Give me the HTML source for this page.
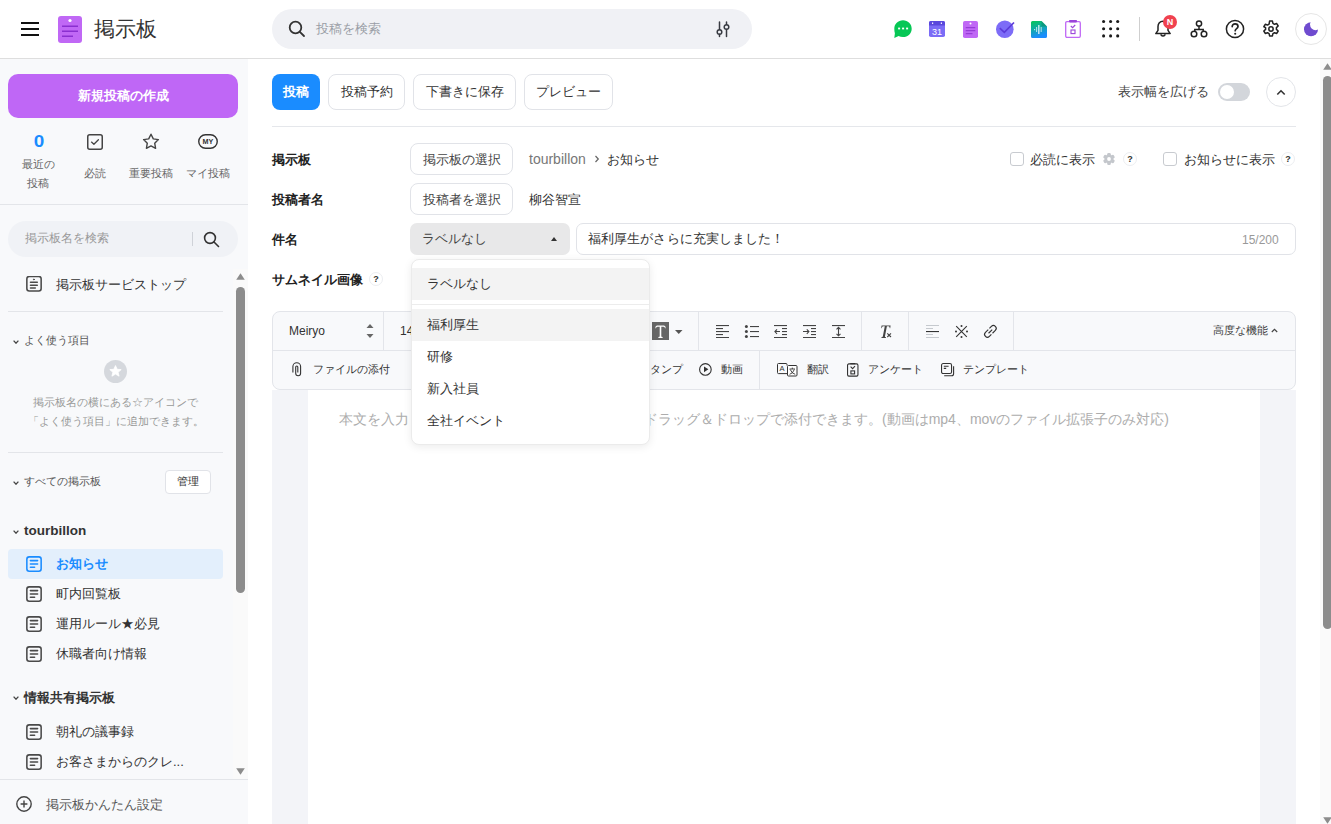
<!DOCTYPE html>
<html><head><meta charset="utf-8">
<style>
*{box-sizing:border-box;margin:0;padding:0}
html,body{width:1331px;height:824px;overflow:hidden;background:#fff;font-family:"Liberation Sans",sans-serif;color:#333}
.a{position:absolute}
svg{display:block}
#hdr{position:absolute;left:0;top:0;width:1331px;height:59px;border-bottom:1px solid #dedede;background:#fff}
#side{position:absolute;left:0;top:59px;width:248px;height:765px;background:#f8f9fb}
.t{position:absolute;white-space:nowrap;line-height:1}
.btn{position:absolute;border:1px solid #e1e3e8;border-radius:8px;background:#fff;height:36px;font-size:13px;color:#333;display:flex;align-items:center;justify-content:center}
.sbtn{position:absolute;border:1px solid #e1e3e8;border-radius:8px;background:#fff;height:32px;padding-top:2px;font-size:13px;color:#444;display:flex;align-items:center;justify-content:center}
.vd{position:absolute;width:1px;background:#e3e5ea}
</style></head><body>

<!-- HEADER -->
<div id="hdr">
  <!-- hamburger -->
  <div class="a" style="left:21px;top:22px;width:18px;height:2px;background:#111"></div>
  <div class="a" style="left:21px;top:28px;width:18px;height:2px;background:#111"></div>
  <div class="a" style="left:21px;top:34px;width:18px;height:2px;background:#111"></div>
  <!-- logo -->
  <svg class="a" style="left:58px;top:16px" width="24" height="27" viewBox="0 0 24 27">
    <rect x="0" y="0" width="24" height="27" rx="3" fill="#c068f5"/>
    <circle cx="12" cy="4.5" r="1.6" fill="#fff"/>
    <rect x="4" y="9.5" width="16" height="1.5" fill="#8a2fd0"/>
    <rect x="4" y="14.5" width="16" height="1.5" fill="#8a2fd0"/>
    <rect x="4" y="19.5" width="11" height="1.5" fill="#8a2fd0"/>
  </svg>
  <div class="t" style="left:94px;top:19px;font-size:20.5px;color:#333">掲示板</div>
  <!-- search -->
  <div class="a" style="left:272px;top:9px;width:480px;height:40px;border-radius:20px;background:#f0f1f5"></div>
  <svg class="a" style="left:288px;top:20px" width="18" height="18" viewBox="0 0 18 18" fill="none" stroke="#333" stroke-width="1.8">
    <circle cx="7.5" cy="7.5" r="5.8"/><path d="M11.8 11.8 L16 16" stroke-linecap="round"/>
  </svg>
  <div class="t" style="left:316px;top:22px;font-size:13px;color:#9a9ea6">投稿を検索</div>
  <svg class="a" style="left:715px;top:20px" width="16" height="18" viewBox="0 0 16 18" fill="none" stroke="#383b42" stroke-width="1.5" stroke-linecap="round"><path d="M4.5 2v7.6M4.5 14.3v2.2M11.5 2v2.6M11.5 9.4v7.1"/><circle cx="4.5" cy="12" r="2.3"/><circle cx="11.5" cy="7" r="2.3"/></svg>

  <!-- app icons -->
  <svg class="a" style="left:894px;top:20px" width="18" height="18" viewBox="0 0 18 18">
    <path d="M9 0.3C13.9 0.3 17.7 4 17.7 8.7C17.7 13.4 13.9 17 9 17C7.3 17 5.9 16.6 4.6 15.9L0.3 18L0.9 13.2C0.5 12 0.3 10.4 0.3 8.7C0.3 4 4.1 0.3 9 0.3Z" fill="#06c755"/>
    <rect x="4.1" y="7.6" width="2" height="1.8" fill="#fff"/><rect x="8.1" y="7.6" width="2" height="1.8" fill="#fff"/><rect x="12.1" y="7.6" width="2" height="1.8" fill="#fff"/>
  </svg>
  <svg class="a" style="left:929px;top:21px" width="16" height="16" viewBox="0 0 16 16">
    <rect x="0" y="0" width="16" height="16" rx="1.8" fill="#7b6cf6"/>
    <path d="M1.8 0H14.2A1.8 1.8 0 0 1 16 1.8V4.5H0V1.8A1.8 1.8 0 0 1 1.8 0Z" fill="#5a47dc"/>
    <rect x="3" y="1.5" width="1.2" height="1.4" fill="#fff"/><rect x="11.8" y="1.5" width="1.2" height="1.4" fill="#fff"/>
    <text x="8" y="14" font-family="Liberation Sans" font-size="9" fill="#fff" text-anchor="middle">31</text>
  </svg>
  <svg class="a" style="left:963px;top:21px" width="15" height="17" viewBox="0 0 15 17">
    <rect x="0" y="0" width="15" height="17" rx="1.8" fill="#c068f5"/>
    <circle cx="7.5" cy="2.6" r="1" fill="#fff"/>
    <rect x="2.7" y="6.2" width="9.6" height="1" fill="#8d33cf"/><rect x="2.7" y="9.2" width="9.6" height="1" fill="#8d33cf"/><rect x="2.7" y="12.2" width="6.8" height="1" fill="#8d33cf"/>
  </svg>
  <svg class="a" style="left:996px;top:20px" width="19" height="18" viewBox="0 0 19 18">
    <circle cx="8.8" cy="9.2" r="8.8" fill="#7d6cf7"/>
    <path d="M3.8 8.2L8.3 12.3L18 2.5" fill="none" stroke="#5b3bd8" stroke-width="1.7"/>
  </svg>
  <svg class="a" style="left:1031px;top:21px" width="16" height="17" viewBox="0 0 16 17">
    <defs><linearGradient id="gd" x1="0" y1="0" x2="0.3" y2="1"><stop offset="0" stop-color="#06c755"/><stop offset="1" stop-color="#1a8cff"/></linearGradient></defs>
    <path d="M1.5 0H10.5L16 5.5V15.5A1.5 1.5 0 0 1 14.5 17H1.5A1.5 1.5 0 0 1 0 15.5V1.5A1.5 1.5 0 0 1 1.5 0Z" fill="url(#gd)"/>
    <path d="M10.5 0L16 5.5H10.5Z" fill="#0a8a6a" opacity="0.6"/>
    <rect x="7.3" y="4" width="1.1" height="9" fill="#fff"/><rect x="5.2" y="6" width="0.9" height="5" fill="#fff" opacity="0.8"/><rect x="9.7" y="6" width="0.9" height="5" fill="#fff" opacity="0.8"/><rect x="3.3" y="8" width="0.8" height="1.2" fill="#fff"/>
  </svg>
  <svg class="a" style="left:1065px;top:20px" width="16" height="18" viewBox="0 0 16 18" fill="none">
    <rect x="0.7" y="1.7" width="14.6" height="15.6" rx="1.2" stroke="#c068f5" stroke-width="1.3"/>
    <rect x="4" y="0" width="8" height="2.4" rx="0.8" fill="#9c45da"/>
    <path d="M5.8 6L7.6 7.7L10.2 5" stroke="#9c45da" stroke-width="1.1"/>
    <rect x="6" y="10" width="4" height="3.6" stroke="#9c45da" stroke-width="1.1"/>
  </svg>
  <!-- grid -->
  <svg class="a" style="left:1100px;top:18px" width="21" height="21" viewBox="0 0 21 21" fill="#1b1b1b">
    <circle cx="3.6" cy="3.5" r="1.55"/><circle cx="10.6" cy="3.5" r="1.55"/><circle cx="17.7" cy="3.5" r="1.55"/>
    <circle cx="3.6" cy="10.7" r="1.55"/><circle cx="10.6" cy="10.7" r="1.55"/><circle cx="17.7" cy="10.7" r="1.55"/>
    <circle cx="3.6" cy="17.9" r="1.55"/><circle cx="10.6" cy="17.9" r="1.55"/><circle cx="17.7" cy="17.9" r="1.55"/>
  </svg>
  <div class="a" style="left:1139px;top:17px;width:1px;height:24px;background:#cfcfcf"></div>
  <!-- bell -->
  <svg class="a" style="left:1154px;top:19px" width="18" height="19" viewBox="0 0 18 19" fill="none" stroke="#222" stroke-width="1.5" stroke-linejoin="round">
    <path d="M9 2.2C5.9 2.2 4 4.6 4 7.6V11.3L1.8 14.6H16.2L14 11.3V7.6C14 4.6 12.1 2.2 9 2.2Z"/>
    <path d="M7 15.2A2 1.7 0 0 0 11 15.2"/>
  </svg>
  <div class="a" style="left:1163px;top:15px;width:14px;height:14px;border-radius:7px;background:#f0414f;color:#fff;font-size:9px;font-weight:bold;text-align:center;line-height:14px">N</div>
  <!-- org -->
  <svg class="a" style="left:1190px;top:20px" width="18" height="18" viewBox="0 0 18 18" fill="none" stroke="#222" stroke-width="1.5">
    <circle cx="9" cy="3.5" r="2.6"/><circle cx="4" cy="14" r="2.8"/><circle cx="14" cy="14" r="2.8"/>
    <path d="M9 6.1V8.8M4.8 11.2V9.4H13.2V11.2"/>
  </svg>
  <!-- help -->
  <svg class="a" style="left:1225px;top:19px" width="20" height="20" viewBox="0 0 20 20" fill="none" stroke="#222" stroke-width="1.5">
    <circle cx="10" cy="10" r="8.6"/>
    <path d="M7.2 7.6C7.2 5.9 8.4 4.8 10.1 4.8C11.8 4.8 13 5.9 13 7.4C13 9.5 10.2 9.6 10.2 11.7" stroke-linecap="round" stroke-width="1.7"/>
    <circle cx="10.2" cy="14.8" r="1.05" fill="#222" stroke="none"/>
  </svg>
  <!-- gear -->
  <svg class="a" style="left:1261px;top:19px" width="20" height="20" viewBox="0 0 24 24" fill="none" stroke="#222" stroke-width="1.8" stroke-linejoin="round">
    <path d="M10.3 2.5h3.4l.6 2.8 1.9 1.1 2.7-.9 1.7 2.9-2.1 1.9v2.2l2.1 1.9-1.7 2.9-2.7-.9-1.9 1.1-.6 2.8h-3.4l-.6-2.8-1.9-1.1-2.7.9-1.7-2.9 2.1-1.9v-2.2L3.4 9.3l1.7-2.9 2.7.9 1.9-1.1z"/>
    <circle cx="12" cy="12" r="2.6"/>
  </svg>
  <!-- moon -->
  <div class="a" style="left:1295px;top:13px;width:32px;height:32px;border-radius:16px;border:1px solid #e6e6e6;background:#fff"></div>
  <svg class="a" style="left:1303px;top:21px" width="16" height="16" viewBox="0 0 16 16"><circle cx="8" cy="8.2" r="7" fill="#6f4bcf"/><circle cx="12.6" cy="3.6" r="5.6" fill="#fff"/></svg>
</div>

<!-- SIDEBAR -->
<div id="side">
  <div class="a" style="left:8px;top:15px;width:230px;height:44px;border-radius:10px;background:#bf67f6"></div>
  <div class="t" style="left:8px;top:30px;width:230px;text-align:center;font-size:13px;font-weight:bold;color:#fff">新規投稿の作成</div>
  <!-- quick links -->
  <div class="t" style="left:28.5px;top:75px;width:20px;text-align:center;font-size:16px;font-weight:bold;color:#1a8cff;transform:scaleX(1.18)">0</div>
  <div class="t" style="left:13px;top:96px;width:50px;text-align:center;font-size:11px;color:#666;line-height:19px;white-space:normal">最近の<br>投稿</div>
  <svg class="a" style="left:87px;top:75px" width="16" height="16" viewBox="0 0 16 16" fill="none" stroke="#444" stroke-width="1.5" stroke-linecap="round" stroke-linejoin="round"><rect x="0.75" y="0.75" width="14.5" height="14.5" rx="2"/><path d="M4.5 8.1L6.9 10.3L11.4 5.8" stroke-width="1.3"/></svg>
  <div class="t" style="left:70px;top:109px;width:50px;text-align:center;font-size:11px;color:#666">必読</div>
  <svg class="a" style="left:142px;top:74px" width="18" height="17" viewBox="0 0 18 17" fill="none" stroke="#444" stroke-width="1.4" stroke-linejoin="round"><path d="M9 1.2L11.3 5.9L16.4 6.6L12.7 10.2L13.6 15.3L9 12.9L4.4 15.3L5.3 10.2L1.6 6.6L6.7 5.9Z"/></svg>
  <div class="t" style="left:126px;top:109px;width:50px;text-align:center;font-size:11px;color:#666">重要投稿</div>
  <svg class="a" style="left:198px;top:75px" width="20" height="15" viewBox="0 0 20 15"><rect x="0.75" y="0.75" width="18.5" height="13.5" rx="6.75" fill="none" stroke="#333" stroke-width="1.4"/><text x="10" y="10.4" font-family="Liberation Sans" font-weight="bold" font-size="7.2" fill="#333" text-anchor="middle">MY</text></svg>
  <div class="t" style="left:183px;top:109px;width:50px;text-align:center;font-size:11px;color:#666">マイ投稿</div>
  <div class="a" style="left:0;top:145px;width:248px;height:1px;background:#e3e5e9"></div>
  <!-- search -->
  <div class="a" style="left:8px;top:162px;width:230px;height:36px;border-radius:18px;background:#f0f2f6"></div>
  <div class="t" style="left:25px;top:173px;font-size:12px;color:#999">掲示板名を検索</div>
  <div class="a" style="left:192px;top:173px;width:1px;height:14px;background:#cfd2d8"></div>
  <svg class="a" style="left:203px;top:172px" width="17" height="17" viewBox="0 0 17 17" fill="none" stroke="#333" stroke-width="1.6"><circle cx="7" cy="7" r="5.4"/><path d="M11 11L15.5 15.5" stroke-linecap="round"/></svg>
  <!-- scroll area -->
  <div class="a" style="left:233px;top:210px;width:15px;height:510px;background:#fafafa"></div>
  <svg class="a" style="left:236px;top:214px" width="9" height="7" viewBox="0 0 9 7"><path d="M4.5 0.3L8.8 6.7H0.2Z" fill="#8c8c8c"/></svg>
  <div class="a" style="left:236px;top:228px;width:9px;height:306px;border-radius:4.5px;background:#8c8c8c"></div>
  <svg class="a" style="left:236px;top:709px" width="9" height="7" viewBox="0 0 9 7"><path d="M0.2 0.3H8.8L4.5 6.7Z" fill="#8c8c8c"/></svg>

  <svg class="a" style="left:26px;top:217px" width="16" height="16" viewBox="0 0 16 16" fill="none" stroke="#4a4a4a" stroke-width="1.55" stroke-linecap="round"><rect x="0.85" y="0.45" width="14.3" height="14.5" rx="2.4"/><circle cx="7.9" cy="3.4" r="0.5" fill="#4a4a4a" stroke-width="0.8"/><path d="M4.5 6.2H11.3M4.5 9.2H11.3M4.5 12H9.3"/></svg>
  <div class="t" style="left:56px;top:219px;font-size:13px;color:#333">掲示板サービストップ</div>
  <div class="a" style="left:8px;top:252px;width:215px;height:1px;background:#e3e5e9"></div>
  <svg class="a" style="left:13px;top:281px" width="6" height="4" viewBox="0 0 6 4"><path d="M0.6 0.6L3 3.2L5.4 0.6" fill="none" stroke="#444" stroke-width="1.3"/></svg>
  <div class="t" style="left:24px;top:276px;font-size:11px;color:#555">よく使う項目</div>
  <svg class="a" style="left:104px;top:301px" width="23" height="23" viewBox="0 0 23 23"><circle cx="11.5" cy="11.5" r="11.5" fill="#d5d8dd"/><path d="M11.5 5.6L13.2 9.3L17.2 9.6L14.1 12.3L15.1 16.2L11.5 14.1L7.9 16.2L8.9 12.3L5.8 9.6L9.8 9.3Z" fill="#fff" stroke="#fff" stroke-width="0.8" stroke-linejoin="round"/></svg>
  <div class="t" style="left:8px;top:334px;width:215px;text-align:center;font-size:11px;line-height:19px;color:#999;white-space:normal">掲示板名の横にある☆アイコンで<br>「よく使う項目」に追加できます。</div>
  <div class="a" style="left:8px;top:393px;width:215px;height:1px;background:#e3e5e9"></div>
  <svg class="a" style="left:13px;top:422px" width="6" height="4" viewBox="0 0 6 4"><path d="M0.6 0.6L3 3.2L5.4 0.6" fill="none" stroke="#444" stroke-width="1.3"/></svg>
  <div class="t" style="left:24px;top:417px;font-size:11px;color:#555">すべての掲示板</div>
  <div class="a" style="left:165px;top:411px;width:46px;height:24px;border-radius:4px;border:1px solid #e1e3e8;background:#fff"></div>
  <div class="t" style="left:165px;top:417px;width:46px;text-align:center;font-size:11px;color:#333">管理</div>
  <svg class="a" style="left:13px;top:471px" width="6" height="4" viewBox="0 0 6 4"><path d="M0.6 0.6L3 3.2L5.4 0.6" fill="none" stroke="#444" stroke-width="1.3"/></svg>
  <div class="t" style="left:24px;top:465px;font-size:13.5px;font-weight:bold;color:#333">tourbillon</div>
  <div class="a" style="left:8px;top:490px;width:215px;height:30px;border-radius:4px;background:#e3effc"></div>
  <svg class="a" style="left:26px;top:497px" width="16" height="16" viewBox="0 0 16 16" fill="none" stroke="#1a8cff" stroke-width="1.55" stroke-linecap="round"><rect x="0.85" y="0.85" width="14.3" height="14.3" rx="2.4"/><path d="M4.4 4.6H11.6M4.4 7.9H11.6M4.4 11.3H8.6"/></svg>
  <div class="t" style="left:56px;top:498px;font-size:13px;font-weight:bold;color:#1a8cff">お知らせ</div>
  <svg class="a" style="left:26px;top:527px" width="16" height="16" viewBox="0 0 16 16" fill="none" stroke="#4a4a4a" stroke-width="1.55" stroke-linecap="round"><rect x="0.85" y="0.85" width="14.3" height="14.3" rx="2.4"/><path d="M4.4 4.6H11.6M4.4 7.9H11.6M4.4 11.3H8.6"/></svg>
  <div class="t" style="left:56px;top:528px;font-size:13px;color:#333">町内回覧板</div>
  <svg class="a" style="left:26px;top:557px" width="16" height="16" viewBox="0 0 16 16" fill="none" stroke="#4a4a4a" stroke-width="1.55" stroke-linecap="round"><rect x="0.85" y="0.85" width="14.3" height="14.3" rx="2.4"/><path d="M4.4 4.6H11.6M4.4 7.9H11.6M4.4 11.3H8.6"/></svg>
  <div class="t" style="left:56px;top:558px;font-size:13px;color:#333">運用ルール★必見</div>
  <svg class="a" style="left:26px;top:587px" width="16" height="16" viewBox="0 0 16 16" fill="none" stroke="#4a4a4a" stroke-width="1.55" stroke-linecap="round"><rect x="0.85" y="0.85" width="14.3" height="14.3" rx="2.4"/><path d="M4.4 4.6H11.6M4.4 7.9H11.6M4.4 11.3H8.6"/></svg>
  <div class="t" style="left:56px;top:588px;font-size:13px;color:#333">休職者向け情報</div>
  <svg class="a" style="left:13px;top:637px" width="6" height="4" viewBox="0 0 6 4"><path d="M0.6 0.6L3 3.2L5.4 0.6" fill="none" stroke="#444" stroke-width="1.3"/></svg>
  <div class="t" style="left:24px;top:632px;font-size:13px;font-weight:bold;color:#333">情報共有掲示板</div>
  <svg class="a" style="left:26px;top:665px" width="16" height="16" viewBox="0 0 16 16" fill="none" stroke="#4a4a4a" stroke-width="1.55" stroke-linecap="round"><rect x="0.85" y="0.85" width="14.3" height="14.3" rx="2.4"/><path d="M4.4 4.6H11.6M4.4 7.9H11.6M4.4 11.3H8.6"/></svg>
  <div class="t" style="left:56px;top:666px;font-size:13px;color:#333">朝礼の議事録</div>
  <svg class="a" style="left:26px;top:695px" width="16" height="16" viewBox="0 0 16 16" fill="none" stroke="#4a4a4a" stroke-width="1.55" stroke-linecap="round"><rect x="0.85" y="0.85" width="14.3" height="14.3" rx="2.4"/><path d="M4.4 4.6H11.6M4.4 7.9H11.6M4.4 11.3H8.6"/></svg>
  <div class="t" style="left:56px;top:696px;font-size:13px;color:#333">お客さまからのクレ...</div>
  <div class="a" style="left:0;top:720px;width:248px;height:1px;background:#e3e5e9"></div>
  <svg class="a" style="left:16px;top:737px" width="16" height="16" viewBox="0 0 16 16" fill="none" stroke="#444" stroke-width="1.4"><circle cx="8" cy="8" r="7.2"/><path d="M8 4.6V11.4M4.6 8H11.4"/></svg>
  <div class="t" style="left:46px;top:739px;font-size:13px;color:#555">掲示板かんたん設定</div>
</div>


<!-- MAIN -->
<div class="a" style="left:272px;top:74px;width:48px;height:36px;border-radius:8px;background:#1a8cff;color:#fff;font-size:13px;font-weight:bold;display:flex;align-items:center;justify-content:center">投稿</div>
<div class="btn" style="left:328px;top:74px;width:77px">投稿予約</div>
<div class="btn" style="left:413px;top:74px;width:103px">下書きに保存</div>
<div class="btn" style="left:524px;top:74px;width:89px">プレビュー</div>
<div class="t" style="left:1118px;top:85px;font-size:13px;color:#444">表示幅を広げる</div>
<div class="a" style="left:1218px;top:83px;width:32px;height:18px;border-radius:9px;background:#d3d6db"></div>
<div class="a" style="left:1220px;top:85px;width:14px;height:14px;border-radius:7px;background:#fff"></div>
<div class="a" style="left:1266px;top:77px;width:30px;height:30px;border-radius:15px;border:1px solid #e3e5e9;background:#fff"></div>
<svg class="a" style="left:1276px;top:89px" width="10" height="7" viewBox="0 0 10 7"><path d="M1.3 5.5L5 1.8L8.7 5.5" fill="none" stroke="#333" stroke-width="1.6"/></svg>
<div class="a" style="left:272px;top:126px;width:1024px;height:1px;background:#e5e7eb"></div>

<div class="t" style="left:272px;top:153px;font-size:13px;font-weight:bold;color:#222">掲示板</div>
<div class="sbtn" style="left:410px;top:143px;width:103px">掲示板の選択</div>
<div class="t" style="left:529px;top:152px;font-size:14px;color:#777">tourbillon</div>
<svg class="a" style="left:594px;top:155px" width="6" height="8" viewBox="0 0 6 8"><path d="M1.5 1L4.3 4L1.5 7" fill="none" stroke="#666" stroke-width="1.2"/></svg>
<div class="t" style="left:607px;top:153px;font-size:13px;color:#333">お知らせ</div>
<div class="a" style="left:1010px;top:152px;width:14px;height:14px;border-radius:3px;border:1px solid #c8cbd0;background:#fff"></div>
<div class="t" style="left:1030px;top:153px;font-size:13px;color:#333">必読に表示</div>
<svg class="a" style="left:1103px;top:153px" width="12" height="12" viewBox="0 0 12 12"><g fill="#c4c7cc"><circle cx="6" cy="6" r="4.4"/><rect x="4.2" y="0" width="3.6" height="12" rx="1.3"/><rect x="4.2" y="0" width="3.6" height="12" rx="1.3" transform="rotate(60 6 6)"/><rect x="4.2" y="0" width="3.6" height="12" rx="1.3" transform="rotate(120 6 6)"/></g><circle cx="6" cy="6" r="1.9" fill="#fff"/></svg>
<div class="a" style="left:1123px;top:152px;width:14px;height:14px;border-radius:7px;border:1px solid #eceef1;background:#fff;font-size:9px;font-weight:bold;color:#333;text-align:center;line-height:12px">?</div>
<div class="a" style="left:1163px;top:152px;width:14px;height:14px;border-radius:3px;border:1px solid #c8cbd0;background:#fff"></div>
<div class="t" style="left:1184px;top:153px;font-size:13px;color:#333">お知らせに表示</div>
<div class="a" style="left:1281px;top:152px;width:14px;height:14px;border-radius:7px;border:1px solid #eceef1;background:#fff;font-size:9px;font-weight:bold;color:#333;text-align:center;line-height:12px">?</div>

<div class="t" style="left:272px;top:193px;font-size:13px;font-weight:bold;color:#222">投稿者名</div>
<div class="sbtn" style="left:410px;top:183px;width:103px">投稿者を選択</div>
<div class="t" style="left:529px;top:193px;font-size:13px;color:#333">柳谷智宣</div>

<div class="t" style="left:272px;top:233px;font-size:13px;font-weight:bold;color:#222">件名</div>
<div class="a" style="left:410px;top:223px;width:160px;height:32px;border-radius:7px;background:#e8e8e9"></div>
<div class="t" style="left:422px;top:232px;font-size:13px;color:#444">ラベルなし</div>
<svg class="a" style="left:551px;top:237px" width="6" height="4" viewBox="0 0 6 4"><path d="M3 0L6 4H0Z" fill="#333"/></svg>
<div class="a" style="left:576px;top:223px;width:720px;height:32px;border-radius:7px;border:1px solid #e1e3e8;background:#fff"></div>
<div class="t" style="left:588px;top:232px;font-size:13px;color:#333;letter-spacing:0.1px">福利厚生がさらに充実しました！</div>
<div class="t" style="left:1242px;top:234px;font-size:12px;color:#999">15/200</div>

<div class="t" style="left:272px;top:273px;font-size:13px;font-weight:bold;color:#222">サムネイル画像</div>
<div class="a" style="left:369px;top:272px;width:14px;height:14px;border-radius:7px;border:1px solid #eceef1;background:#fff;font-size:9px;font-weight:bold;color:#333;text-align:center;line-height:12px">?</div>

<!-- editor -->
<div class="a" style="left:272px;top:311px;width:1024px;height:79px;border:1px solid #e3e5ea;border-radius:8px;background:#f8f9fb"></div>
<div class="a" style="left:272px;top:350px;width:1024px;height:1px;background:#e3e5ea"></div>
<div class="a" style="left:272px;top:390px;width:36px;height:434px;background:#f3f4f8"></div>
<div class="a" style="left:1260px;top:390px;width:36px;height:434px;background:#f3f4f8"></div>


<!-- toolbar row1 -->
<div class="t" style="left:289px;top:325px;font-size:12px;color:#333">Meiryo</div>
<svg class="a" style="left:366px;top:324px" width="8" height="14" viewBox="0 0 8 14"><path d="M4 0L7.5 4H0.5Z M0.5 10H7.5L4 14Z" fill="#666"/></svg>
<div class="vd" style="left:383px;top:312px;height:38px"></div>
<div class="t" style="left:400px;top:325px;font-size:12px;color:#333">14</div>
<svg class="a" style="left:652px;top:322px" width="17" height="18" viewBox="0 0 17 18"><rect width="17" height="18" fill="#666"/>
  <path d="M3.3 6.2Q3.3 3.6 5 3.6H12Q13.7 3.6 13.7 6.2L13 6.2Q12.6 4.8 11.4 4.8H9.3V14.6Q9.3 15 10.6 15V16H6.4V15Q7.7 15 7.7 14.6V4.8H5.6Q4.4 4.8 4 6.2Z" fill="#fff"/></svg>
<svg class="a" style="left:675px;top:330px" width="8" height="4" viewBox="0 0 8 4"><path d="M0 0H7.5L3.75 4Z" fill="#555"/></svg>
<div class="vd" style="left:698px;top:312px;height:38px"></div>
<svg class="a" style="left:716px;top:325px" width="13" height="13" viewBox="0 0 13 13" fill="#444"><rect x="0" y="0" width="13" height="1.1"/><rect x="0" y="3" width="7" height="1.1"/><rect x="0" y="6" width="13" height="1.1"/><rect x="0" y="9" width="7" height="1.1"/><rect x="0" y="12" width="13" height="1.1"/></svg>
<svg class="a" style="left:744px;top:325px" width="16" height="13" viewBox="0 0 16 13" fill="#444"><circle cx="2.4" cy="1.5" r="1.5"/><circle cx="2.4" cy="6.5" r="1.5"/><circle cx="2.4" cy="11.5" r="1.5"/><rect x="6" y="1" width="9" height="1.1"/><rect x="6" y="6" width="9" height="1.1"/><rect x="6" y="11" width="9" height="1.1"/></svg>
<svg class="a" style="left:774px;top:325px" width="13" height="13" viewBox="0 0 13 13"><g fill="#444"><rect x="0" y="0" width="13" height="1.1"/><rect x="8" y="3" width="5" height="1.1"/><rect x="8" y="6" width="5" height="1.1"/><rect x="8" y="9" width="5" height="1.1"/><rect x="0" y="12" width="13" height="1.1"/></g><path d="M6 6.55H1M3 4.3L0.9 6.55L3 8.8" fill="none" stroke="#444" stroke-width="1.1"/></svg>
<svg class="a" style="left:803px;top:325px" width="13" height="13" viewBox="0 0 13 13"><g fill="#444"><rect x="0" y="0" width="13" height="1.1"/><rect x="8" y="3" width="5" height="1.1"/><rect x="8" y="6" width="5" height="1.1"/><rect x="8" y="9" width="5" height="1.1"/><rect x="0" y="12" width="13" height="1.1"/></g><path d="M0 6.55H5.5M3.8 4.3L5.9 6.55L3.8 8.8" fill="none" stroke="#444" stroke-width="1.1"/></svg>
<svg class="a" style="left:832px;top:325px" width="13" height="13" viewBox="0 0 13 13"><g fill="#444"><rect x="0" y="0" width="13" height="1.1"/><rect x="0" y="12" width="13" height="1.1"/></g><path d="M6.5 2.2V10.9M4.5 4.3L6.5 2.3L8.5 4.3M4.5 8.8L6.5 10.8L8.5 8.8" fill="none" stroke="#444" stroke-width="1.1"/></svg>
<div class="vd" style="left:861px;top:312px;height:38px"></div>
<svg class="a" style="left:879px;top:324px" width="14" height="15" viewBox="0 0 14 15"><path d="M2.6 1.6H11.6L11.2 4.2H10.8Q10.7 2.3 9.6 2.3H7.9L5.9 12.6Q5.8 13.2 7 13.3V13.9H2.4V13.3Q3.6 13.2 3.8 12.6L5.8 2.3H4.2Q3.1 2.3 2.5 4.2H2.1Z" fill="#444"/><path d="M8.3 9.3L12 13M12 9.3L8.3 13" stroke="#444" stroke-width="1.1"/></svg>
<div class="vd" style="left:908px;top:312px;height:38px"></div>
<svg class="a" style="left:926px;top:325px" width="13" height="13" viewBox="0 0 13 13"><g fill="#c5c9ce"><rect x="0" y="0" width="13" height="1"/><rect x="0" y="3" width="7" height="1"/><rect x="0" y="9" width="7" height="1"/><rect x="0" y="12" width="13" height="1"/></g><rect x="0" y="6" width="13" height="1.1" fill="#333"/></svg>
<svg class="a" style="left:955px;top:325px" width="13" height="13" viewBox="0 0 13 13"><path d="M1.2 1.2L11.8 11.8M11.8 1.2L1.2 11.8" stroke="#333" stroke-width="1.1"/><g fill="#333"><circle cx="6.5" cy="1" r="1"/><circle cx="6.5" cy="12" r="1"/><circle cx="1" cy="6.5" r="1"/><circle cx="12" cy="6.5" r="1"/></g></svg>
<svg class="a" style="left:980px;top:321px" width="22" height="21" viewBox="0 0 22 21"><g transform="translate(10.4,10.4) rotate(-45)" fill="none" stroke="#333" stroke-width="1.15"><path d="M1.4 -2.8 H4.2 A2.8 2.8 0 0 1 4.2 2.8 H0.2"/><path d="M-1.4 2.8 H-4.2 A2.8 2.8 0 0 1 -4.2 -2.8 H-0.2"/><path d="M-2.6 0 H2.6"/></g></svg>
<div class="vd" style="left:1013px;top:312px;height:38px"></div>
<div class="t" style="left:1213px;top:325px;font-size:11px;color:#444">高度な機能</div>
<svg class="a" style="left:1271px;top:328px" width="7" height="5" viewBox="0 0 7 5"><path d="M0.8 4L3.5 1.3L6.2 4" fill="none" stroke="#444" stroke-width="1.2"/></svg>
<!-- toolbar row2 -->
<svg class="a" style="left:292px;top:362px" width="10" height="15" viewBox="0 0 10 15" fill="none" stroke="#333" stroke-width="1.1"><path d="M0.9 10.6V4.6A3.6 3.6 0 0 1 8.6 4.6V11.3A2.4 2.4 0 0 1 3.7 11.3V5A1.05 1.05 0 0 1 5.8 5V10.4"/></svg>
<div class="t" style="left:313px;top:364px;font-size:11px;color:#333">ファイルの添付</div>
<div class="t" style="left:639px;top:364px;font-size:11px;color:#333">スタンプ</div>
<svg class="a" style="left:699px;top:363px" width="13" height="13" viewBox="0 0 13 13"><circle cx="6.4" cy="6.4" r="5.8" fill="none" stroke="#333" stroke-width="1.1"/><path d="M5 3.4V9.2L9.4 6.3Z" fill="#333"/></svg>
<div class="t" style="left:721px;top:364px;font-size:11px;color:#333">動画</div>
<div class="vd" style="left:759px;top:351px;height:39px"></div>
<svg class="a" style="left:777px;top:363px" width="21" height="14" viewBox="0 0 21 14"><path d="M10 10.6H1.5A1 1 0 0 1 0.5 9.6V1.5A1 1 0 0 1 1.5 0.5H9A1 1 0 0 1 10 1.5V2.5" fill="none" stroke="#333" stroke-width="1"/><rect x="10.5" y="2.5" width="9.5" height="10.5" rx="1" fill="#fff" stroke="#333" stroke-width="1"/><text x="2.6" y="8.2" font-family="Liberation Sans" font-size="7.5" fill="#333">A</text><path d="M12.6 6H18M15.3 4.6V6M13.2 6.5Q15 10.8 18.2 11.3M17.4 6.5Q15.6 10.8 12.6 11.3" fill="none" stroke="#333" stroke-width="0.9"/></svg>
<div class="t" style="left:807px;top:364px;font-size:11px;color:#333">翻訳</div>
<svg class="a" style="left:847px;top:363px" width="12" height="14" viewBox="0 0 12 14" fill="none" stroke="#333" stroke-width="1.1"><rect x="0.55" y="0.9" width="10.4" height="12.2" rx="1.3"/><path d="M3.3 0.6H8.2" stroke-width="1.3"/><path d="M3.6 3.6L5.6 5.6L8 3.2"/><rect x="3.9" y="7.9" width="3.7" height="3"/></svg>
<div class="t" style="left:868px;top:364px;font-size:11px;color:#333">アンケート</div>
<svg class="a" style="left:941px;top:363px" width="14" height="14" viewBox="0 0 14 14" fill="none" stroke="#333" stroke-width="1.1"><rect x="0.55" y="0.55" width="10" height="10" rx="1.6"/><path d="M2.8 3.2H7.6M2.8 5.4H5.2"/><path d="M12.6 3.2V10.8A2 2 0 0 1 10.6 12.8H3.2"/></svg>
<div class="t" style="left:963px;top:364px;font-size:11px;color:#333">テンプレート</div>

<div class="t" style="left:339px;top:412px;font-size:14px;color:#adadad">本文を入力</div>
<div class="t" style="left:644px;top:412px;font-size:14px;color:#adadad">ドラッグ＆ドロップで添付できます。(動画はmp4、movのファイル拡張子のみ対応)</div>

<!-- dropdown -->
<div class="a" style="left:411px;top:259px;width:239px;height:186px;border-radius:8px;background:#fff;border:1px solid #ebebeb;box-shadow:0 2px 8px rgba(0,0,0,0.08)"></div>
<div class="a" style="left:412px;top:268px;width:237px;height:32px;background:#f3f3f3"></div>
<div class="a" style="left:412px;top:304px;width:237px;height:1px;background:#ececec"></div>
<div class="a" style="left:412px;top:309px;width:237px;height:32px;background:#f3f3f3"></div>
<div class="t" style="left:427px;top:277px;font-size:13px;color:#333">ラベルなし</div>
<div class="t" style="left:427px;top:318px;font-size:13px;color:#333">福利厚生</div>
<div class="t" style="left:427px;top:350px;font-size:13px;color:#333">研修</div>
<div class="t" style="left:427px;top:382px;font-size:13px;color:#333">新入社員</div>
<div class="t" style="left:427px;top:414px;font-size:13px;color:#333">全社イベント</div>

<!-- page scrollbar -->
<div class="a" style="left:1320px;top:59px;width:11px;height:765px;background:#fafafa"></div>
<svg class="a" style="left:1323px;top:63px" width="9" height="7" viewBox="0 0 9 7"><path d="M4.5 0.3L8.8 6.7H0.2Z" fill="#8c8c8c"/></svg>
<div class="a" style="left:1323px;top:76px;width:9px;height:553px;border-radius:4.5px;background:#8c8c8c"></div>
<svg class="a" style="left:1323px;top:817px" width="9" height="7" viewBox="0 0 9 7"><path d="M0.2 0.3H8.8L4.5 6.7Z" fill="#8c8c8c"/></svg>

</body></html>
